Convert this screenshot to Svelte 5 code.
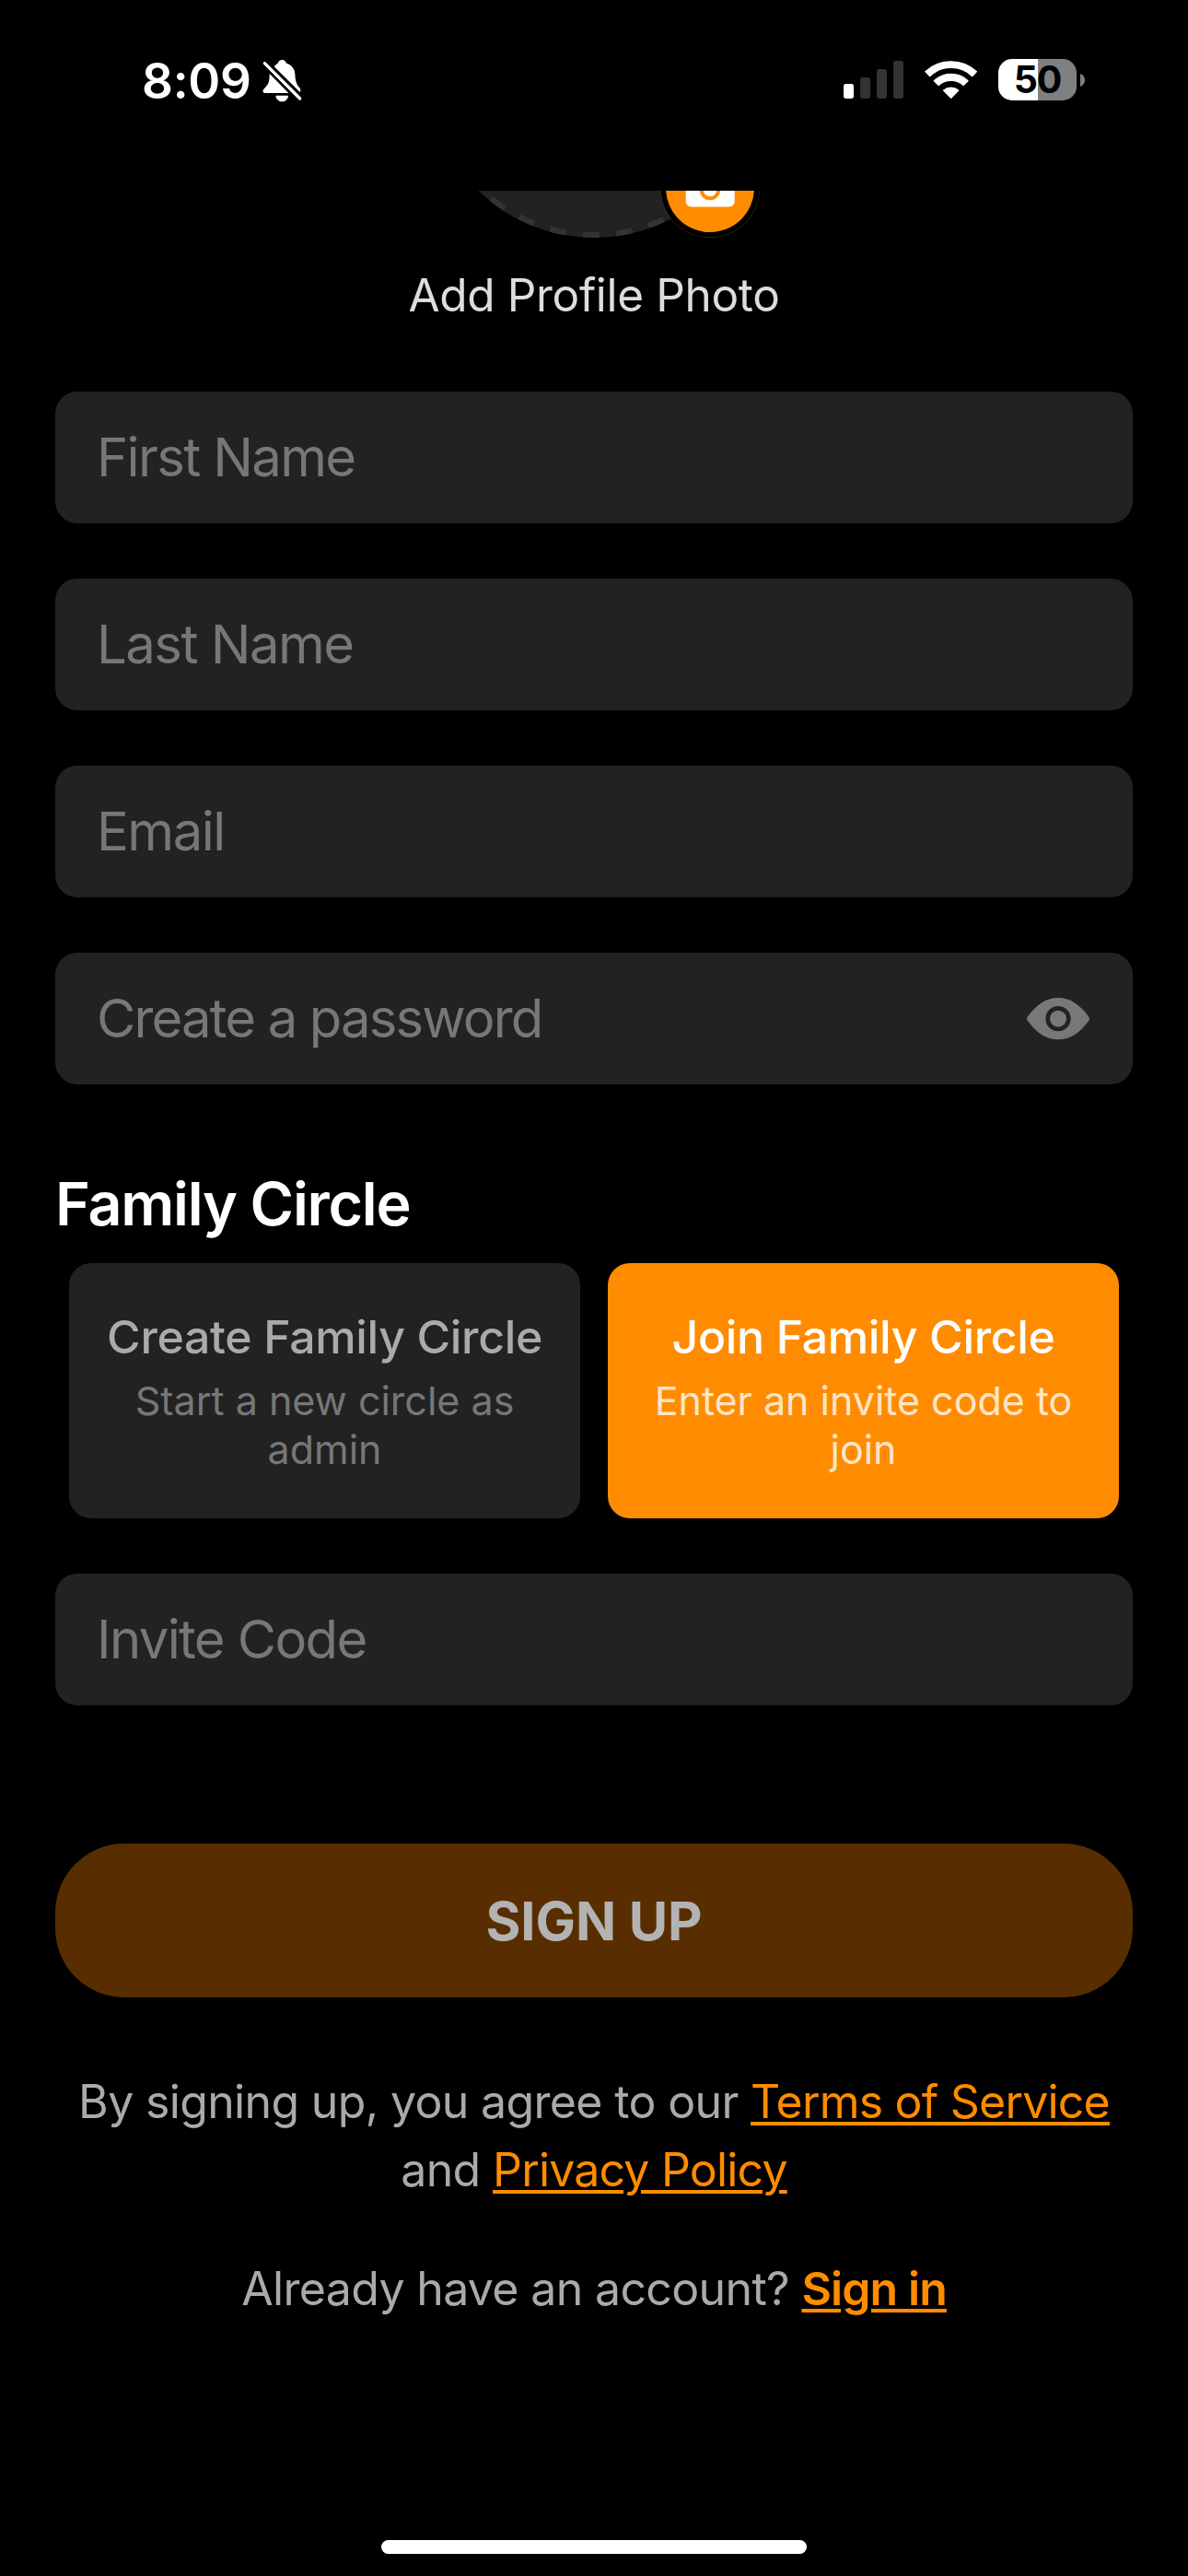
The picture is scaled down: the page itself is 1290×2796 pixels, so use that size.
<script>
  let mode = $state('join');

  const fields = [
    { id: 'first', text: 'First Name' },
    { id: 'last', text: 'Last Name' },
    { id: 'email', text: 'Email' },
    { id: 'password', text: 'Create a password', secret: true },
  ];

  const circles = [
    { id: 'create', title: 'Create Family Circle', note: 'Start a new circle as admin' },
    { id: 'join', title: 'Join Family Circle', note: 'Enter an invite code to join' },
  ];

  const bars = [
    { x: 0, y: 75, on: true },
    { x: 54, y: 54, on: false },
    { x: 108, y: 27, on: false },
    { x: 162, y: 0, on: false },
  ];
</script>

<div class="screen">
  <header class="status">
    <span class="time">8:09</span>
    <svg class="bell" viewBox="460 70 140 145" fill="#fff">
      <path d="M489 121 L551 184 H476 C467 184 465 176 470 171 C480 162 487 153 488 140 Z" />
      <path d="M504 98 C508 92 513 89 516 87 C518 80 523 76 530 76 C537 76 542 81 544 87 C562 93 571 105 572 122 C573 145 577 157 587 167 C591 172 591 177 588 181 Z" />
      <path d="M509 192 H550 C549 204 541 212 530 212 C519 212 510 204 509 192 Z" />
      <path d="M473 87 L588 202" stroke="#fff" stroke-width="10" stroke-linecap="round" />
    </svg>
    <div class="indicators">
      <svg class="signal" viewBox="0 0 195 123">
        {#each bars as b}
          <rect x={b.x} y={b.y} width="33" height={123 - b.y} rx="8" fill={b.on ? '#fff' : '#333'} />
        {/each}
      </svg>
      <svg class="wifi" viewBox="342 75 171 127" fill="#fff" stroke="#fff" stroke-width="4" stroke-linejoin="round">
        <path d="M344.6 113 A123.5 123.5 0 0 1 511.4 113 L497.500 128 A101 101 0 0 0 358.500 128 Z" />
        <path d="M373 143.500 A80 80 0 0 1 483 143.500 L468.500 157.500 A60 60 0 0 0 387.500 157.500 Z" />
        <path d="M403.500 174.500 A38 38 0 0 1 452.500 174.500 L428 199 Z" />
      </svg>
      <div class="battery"><span>50</span></div>
      <svg class="nub" viewBox="0 0 5 14"><path d="M0 0 C3.500 1.500 5 4 5 7 S3.500 12.500 0 14 Z" fill="#808080" /></svg>
    </div>
  </header>

  <main>
    <section class="photo">
      <svg class="avatar" viewBox="465 207 360 51">
        <circle cx="645" cy="78" r="180" fill="#222" />
        <path d="M777.6 195.3 A177 177 0 0 1 491.7 166.500" fill="none" stroke="#333" stroke-width="6" stroke-dasharray="18 18" />
        <circle cx="771" cy="204" r="54" fill="#5a3200" />
        <circle cx="771" cy="204" r="53.600" fill="#000" />
        <circle cx="771" cy="204" r="48" fill="#ff8c00" />
        <rect x="744.700" y="180" width="53" height="44.600" rx="6" fill="#fff" />
        <circle cx="771" cy="206" r="9.300" fill="#fff" stroke="#ff8c00" stroke-width="4" />
      </svg>
      <p>Add Profile Photo</p>
    </section>

    <div class="fields">
      {#each fields as f (f.id)}
        <div class="field">
          <span class={f.id}>{f.text}</span>
          {#if f.secret}
            <svg class="eye" viewBox="105 190 204 136">
              <path d="M107 252 C135 213 168 190 207 190 S279 213 307 252 Q311 258 307 264 C279 303 246 326 207 326 S135 303 107 264 Q103 258 107 252 Z" fill="#787878" />
              <circle cx="207" cy="258" r="34" fill="none" stroke="#222" stroke-width="14" />
            </svg>
          {/if}
        </div>
      {/each}
    </div>

    <h2>Family Circle</h2>
    <div class="cards">
      {#each circles as c (c.id)}
        <button class="card" class:active={mode === c.id} onclick={() => (mode = c.id)}>
          <strong>{c.title}</strong>
          <small>{c.note}</small>
        </button>
      {/each}
    </div>

    <div class="field invite"><span>Invite Code</span></div>

    <button class="signup">SIGN UP</button>

    <p class="legal">By signing up, you agree to our <a href="#terms">Terms of Service</a> and <a href="#privacy">Privacy Policy</a></p>
    <p class="login">Already have an account? <a href="#signin">Sign in</a></p>
  </main>

  <div class="home"></div>
</div>

<style>
  :global(body) {
    background: #000;
  }

  .screen {
    display: flex;
    flex-direction: column;
    box-sizing: border-box;
    width: 1290px;
    height: 2796px;
    overflow: hidden;
    background: #000;
    color: #fff;
    font-family: Inter, 'Liberation Sans', sans-serif;
  }

  p, h2 { margin: 0; }
  svg { display: block; flex: none; }
  button { border: 0; font-family: inherit; cursor: pointer; }

  .status {
    display: flex;
    align-items: flex-start;
    flex: none;
    box-sizing: border-box;
    height: 207px;
    padding: 56px 112px 0 154px;
  }
  .time {
    width: 118px;
    font-size: 53px;
    line-height: 64px;
    font-weight: 600;
    letter-spacing: -0.3px;
  }
  .bell { width: 46.7px; height: 48.3px; margin: 7.3px 0 0 11.3px; }
  .indicators {
    display: flex;
    align-items: center;
    height: 45px;
    margin: 8px 0 0 auto;
  }
  .signal { width: 65px; height: 41px; margin-right: 23px; }
  .wifi { width: 57px; height: 42.3px; margin-right: 23px; }
  .battery {
    width: 85px;
    height: 45px;
    border-radius: 15px;
    background: linear-gradient(to right, #fff 43px, #808080 43px);
    color: #000;
    text-align: center;
    font-size: 41px;
    line-height: 45px;
    font-weight: 700;
    letter-spacing: -1.2px;
  }
  .nub { width: 5px; height: 14px; margin-left: 4px; }

  main {
    display: flex;
    flex-direction: column;
    padding: 0 60px;
  }

  .photo { text-align: center; }
  .avatar { width: 360px; height: 51px; margin: 0 auto 32px; }
  .photo p {
    font-size: 49.5px;
    line-height: 60px;
    letter-spacing: -0.34px;
    color: #ddd;
  }

  .fields {
    display: grid;
    gap: 60px;
    margin-top: 75px;
  }
  .field {
    display: flex;
    align-items: center;
    justify-content: space-between;
    box-sizing: border-box;
    height: 143px;
    padding: 0 47px 0 45px;
    border-radius: 24px;
    background: #222;
    color: #777;
    font-size: 58px;
    letter-spacing: -1.5px;
  }
  .field span { padding-bottom: 2px; }
  .field .first, .invite span { letter-spacing: -1.64px; }
  .field .password { letter-spacing: -1.86px; }
  .eye { width: 68px; height: 45.3px; margin-top: 1px; }

  h2 {
    margin: 91px 0 25px;
    font-size: 64.5px;
    line-height: 78px;
    font-weight: 600;
    letter-spacing: -1.24px;
  }

  .cards {
    display: grid;
    grid-template-columns: 1fr 1fr;
    gap: 30px;
    padding: 0 15px;
  }
  .card {
    display: flex;
    flex-direction: column;
    align-items: center;
    height: 277px;
    padding: 50px 30px 0;
    border-radius: 24px;
    background: #222;
    color: #aaa;
  }
  .card strong {
    font-size: 50px;
    line-height: 60px;
    font-weight: 500;
    letter-spacing: -0.35px;
    white-space: nowrap;
  }
  .card small {
    margin-top: 13px;
    font-size: 43px;
    line-height: 53px;
    letter-spacing: 0;
    color: #777;
  }
  .card.active { background: #ff8c00; color: #fff; }
  .card.active small { color: rgba(255, 255, 255, 0.8); }

  .invite { margin-top: 60px; }

  .signup {
    height: 167px;
    margin-top: 150px;
    padding: 0;
    border-radius: 75px;
    background: #582e00;
    color: #b3b3b3;
    font-size: 58px;
    font-weight: 700;
    letter-spacing: -0.1px;
  }

  .legal, .login {
    text-align: center;
    font-size: 50px;
    line-height: 74px;
    letter-spacing: -0.65px;
    color: #aaa;
  }
  .legal { margin-top: 76px; }
  .login { margin-top: 55px; }
  a {
    color: #ff8c00;
    text-decoration: underline;
    text-decoration-thickness: 4px;
    text-underline-offset: 4px;
  }
  .legal a { letter-spacing: -0.8px; }
  .login a { font-weight: 600; letter-spacing: -0.9px; }

  .home {
    flex: none;
    width: 462px;
    height: 15px;
    margin: auto auto 24px;
    border-radius: 8px;
    background: #fff;
  }
</style>
